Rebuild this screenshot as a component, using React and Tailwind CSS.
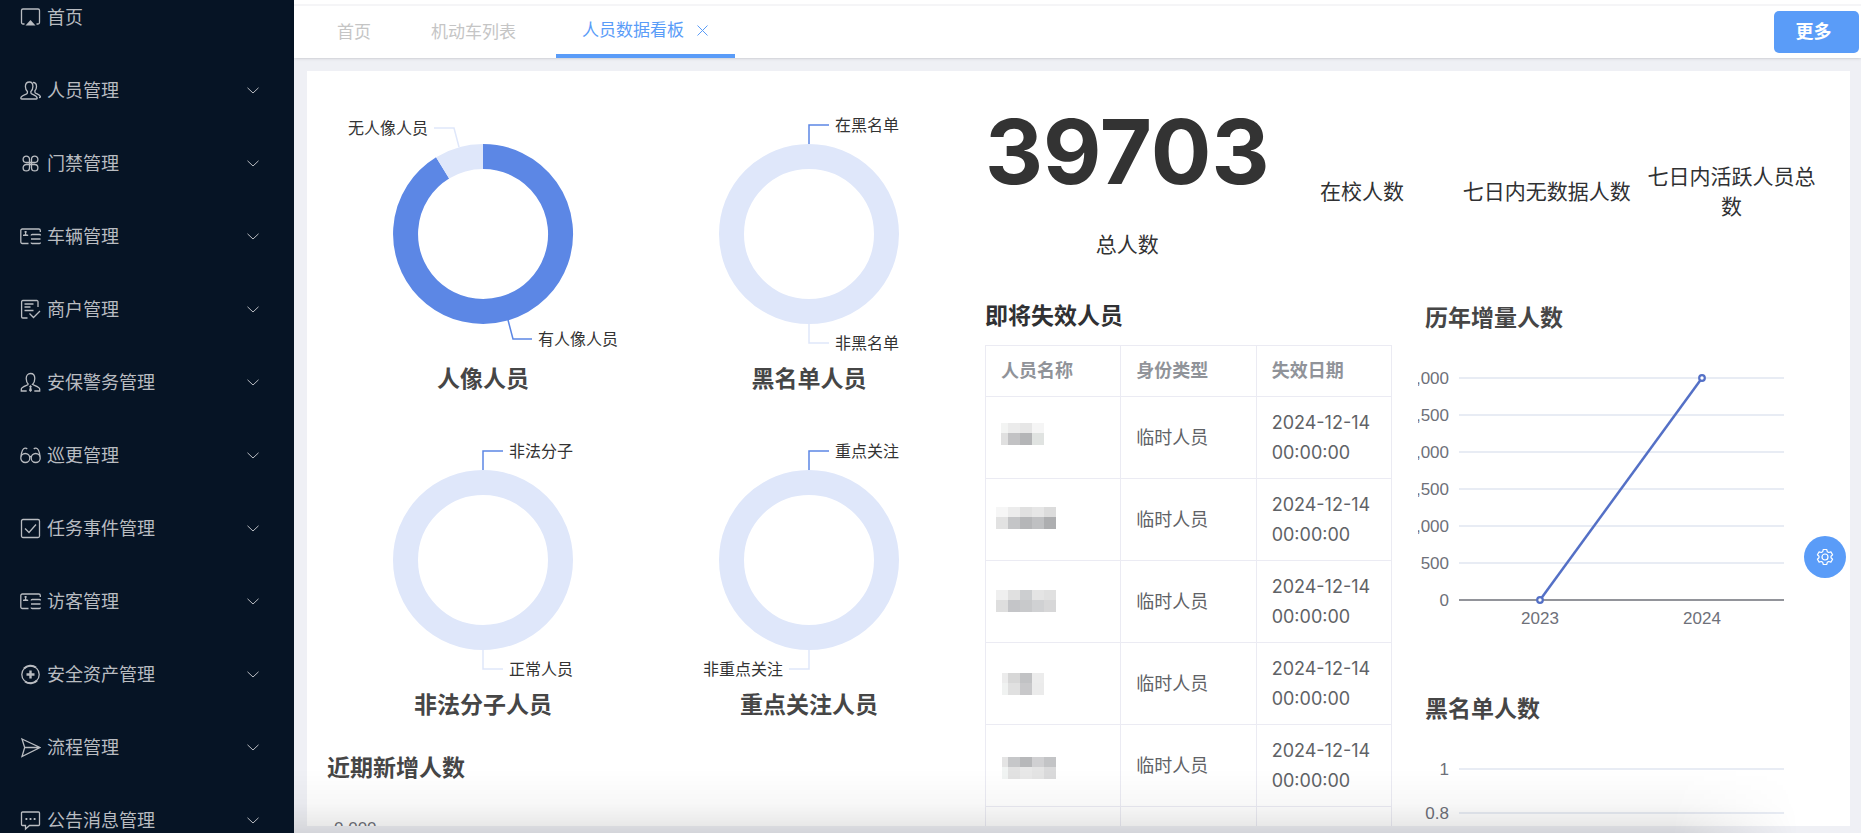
import { useState } from "react";

/* --- ICONS (21x21 grid) --- */
const icons = {
  home: (
    <>
      <path d="M4.500 17H3a1.500 1.500 0 0 1-1.500-1.500V3.500A1.500 1.500 0 0 1 3 2h15a1.500 1.500 0 0 1 1.500 1.500v12A1.500 1.500 0 0 1 18 17h-1.500" />
      <path d="M10.500 13l5 5.500h-10z" fill="currentColor" stroke="none" />
    </>
  ),
  users: (
    <>
      <path d="M9.500 2C7 2 5.400 3.800 5.400 6.500c0 2 .8 3.800 2 4.900v1.300c0 .8-.5 1.100-1.300 1.500-2 .9-5.300 1.800-5.300 4.100 0 .6.4.7.9.7h14.600c.6 0 .9-.2.9-.7 0-2.300-3.200-3.200-5-4.100-.8-.4-1.300-.7-1.300-1.500v-1.300c1.200-1.100 2-2.900 2-4.900C12.900 3.800 11.800 2 9.500 2z" />
      <path d="M13 2.500c2.200 0 3.500 1.700 3.500 4 0 1.700-.6 3.200-1.600 4.300v1.400c0 1.700 5.500 1.900 5.500 4.600 0 .5-.5.7-1.400.7" />
    </>
  ),
  command: (
    <path d="M9.500 9.500V6.300A3.200 3.200 0 1 0 6.300 9.500h8.400a3.200 3.200 0 1 0-3.200-3.200v8.400a3.200 3.200 0 1 0 3.200-3.200H6.300a3.200 3.200 0 1 0 3.200 3.200V9.500" />
  ),
  card: (
    <>
      <path d="M8.500 17.500H2.300a1.500 1.500 0 0 1-1.500-1.500V4.500A1.500 1.500 0 0 1 2.300 3h16.500a1.500 1.500 0 0 1 1.500 1.500V6" />
      <path d="M20.500 9.500c0-.7-.5-1-1-1h-7.300c-.6 0-1 .3-1 1M11 13h9.500M20.500 16.500c0 .7-.5 1-1 1h-7.300c-.6 0-1-.3-1-1" />
      <path d="M4.600 5h2v1.600l-.4.4v1.300l2 .5V10H3V8.800l2-.5V7l-.4-.4z" fill="currentColor" stroke="none" />
    </>
  ),
  doc: (
    <>
      <path d="M7.500 19H2.800a1.200 1.200 0 0 1-1.200-1.200V2.700a1.200 1.200 0 0 1 1.200-1.200h14a1.200 1.200 0 0 1 1.200 1.200V8" />
      <path d="M4.500 5h9M4.500 8h6M4.500 11.500h9M9.500 14.500l4 4 6.500-6.500" />
    </>
  ),
  guard: (
    <>
      <path d="M8.500 12.500C7 11 6.200 9 6.200 6.500 6.200 3.500 8 1.500 10.500 1.500s4.300 2 4.300 5c0 2.500-.8 4.500-2.300 6 2 1 7.200 2.300 7.200 4.500v2h-5.400M8.500 12.500c-2 1-7.200 2.300-7.200 4.500v2h5.400" />
      <path d="M10.500 13l1.400 1.500-.7 1 .8 3-1.500 1.400L9 18.500l.8-3-.7-1z" fill="currentColor" stroke="none" />
    </>
  ),
  glasses: (
    <>
      <circle cx="5.300" cy="13" r="4.500" />
      <circle cx="15.700" cy="13" r="4.500" />
      <path d="M9.500 12c.6-.7 1.400-.7 2 0M1 11.500C1.500 7 2.800 3.500 5 3.200c1-.1 1.700.2 2.200.8M20 11.500c-.5-4.500-1.800-8-4-8.300-1-.1-1.700.2-2.200.8" />
    </>
  ),
  check: (
    <>
      <rect x="1.500" y="1.500" width="18" height="18" rx="1.500" />
      <path d="M5 10.500l4 4 7-8" />
    </>
  ),
  plus: (
    <>
      <circle cx="10.500" cy="10.500" r="8.700" />
      <path d="M4 4.500a9 9 0 0 1 12-1M5 17.500a9 9 0 0 0 12-1" strokeWidth="2" />
      <path d="M10.500 6.500v8M6.500 10.500h8" strokeWidth="2.400" />
    </>
  ),
  send: <path d="M2 2l18 8.500L2 19.500 4.700 10.500zM4.700 10.500H20" />,
  message: (
    <>
      <path d="M2.500 2h16a1 1 0 0 1 1 1v11.500a1 1 0 0 1-1 1H9.500l-4 3.500v-3.500h-3a1 1 0 0 1-1-1V3a1 1 0 0 1 1-1z" />
      <path d="M5.500 9h1.800M9.600 9h1.800M13.700 9h1.800" strokeWidth="1.800" />
    </>
  ),
};

const menu = [
  { name: "首页", icon: "home", leaf: true },
  { name: "人员管理", icon: "users" },
  { name: "门禁管理", icon: "command" },
  { name: "车辆管理", icon: "card" },
  { name: "商户管理", icon: "doc" },
  { name: "安保警务管理", icon: "guard" },
  { name: "巡更管理", icon: "glasses" },
  { name: "任务事件管理", icon: "check" },
  { name: "访客管理", icon: "card" },
  { name: "安全资产管理", icon: "plus" },
  { name: "流程管理", icon: "send" },
  { name: "公告消息管理", icon: "message" },
];

const BLUE = "#5c87e5";
const PALE = "#dfe7fa";

const donuts = [
  {
    title: "人像人员",
    slice: true,
    labels: [
      { text: "无人像人员", color: PALE, line: "114,57 134,57 139,76", x: 108, y: 57, anchor: "end" },
      { text: "有人像人员", color: BLUE, line: "188,249 193,268 212,268", x: 218, y: 268, anchor: "start" },
    ],
  },
  {
    title: "黑名单人员",
    labels: [
      { text: "在黑名单", color: BLUE, line: "163,73 163,54 183,54", x: 189, y: 54, anchor: "start" },
      { text: "非黑名单", color: PALE, line: "163,253 163,272 183,272", x: 189, y: 272, anchor: "start" },
    ],
  },
  {
    title: "非法分子人员",
    labels: [
      { text: "非法分子", color: BLUE, line: "163,73 163,54 183,54", x: 189, y: 54, anchor: "start" },
      { text: "正常人员", color: PALE, line: "163,253 163,272 183,272", x: 189, y: 272, anchor: "start" },
    ],
  },
  {
    title: "重点关注人员",
    labels: [
      { text: "重点关注", color: BLUE, line: "163,73 163,54 183,54", x: 189, y: 54, anchor: "start" },
      { text: "非重点关注", color: PALE, line: "163,253 163,272 143,272", x: 137, y: 272, anchor: "end" },
    ],
  },
];

// Masked names: offset, first cell width, then two rows of 12px cells
const people = [
  { x: 5, y: 0, first: 7, top: ["#f3f4f3", "#ebebeb", "#e6e6e6", "#f5f5f5"], bottom: ["#e0e0e0", "#c2c2c4", "#b4b5b7", "#e0e3e1"] },
  { x: 0, y: 2, first: 12, top: ["#f6f6f6", "#ececec", "#e0e0e0", "#e6e6e6", "#dcdcdc"], bottom: ["#e2e2e2", "#c4c5c7", "#b5b6b8", "#bfc0c2", "#adaeb0"] },
  { x: 0, y: 3, first: 12, top: ["#efefef", "#e0e0e0", "#ccced0", "#e4e4e4", "#e0e0e0"], bottom: ["#dedede", "#c4c5c8", "#c8c9cb", "#d0d1d3", "#d7d7d8"] },
  { x: 6, y: 4, first: 6, top: ["#ececec", "#d7d7d7", "#c1c2c4", "#ececec"], bottom: ["#f0f2f1", "#e0e0e0", "#c8c8ca", "#ebebeb"] },
  { x: 6, y: 6, first: 6, top: ["#e4e4e4", "#c6c7c9", "#b7b8ba", "#d0d0d2", "#c3c4c6"], bottom: ["#f1f4f3", "#e2e2e2", "#e8e8e8", "#e4e4e4", "#dadadb"] },
];

const MenuItem = ({ item }) => (
  <li>
    <a href="#" className="flex h-[73px] items-center pl-5 pr-[35px] text-[18px] leading-6 text-[#b9bcc1]">
      <svg width="21" height="21" viewBox="0 0 21 21" fill="none" stroke="currentColor" strokeWidth="1.300" className="mr-1.5 shrink-0">
        {icons[item.icon]}
      </svg>
      <span className="flex-1">{item.name}</span>
      {!item.leaf && (
        <svg width="12" height="7" viewBox="0 0 12 7" fill="none" stroke="currentColor">
          <path d="M0.500 0.800l5.500 5.200 5.500-5.200" />
        </svg>
      )}
    </a>
  </li>
);

const Donut = ({ data }) => (
  <svg viewBox="0 0 326 326" className="w-full" role="img" aria-label={data.title}>
    {data.slice ? (
      <>
        <path d="M163 85.500A77.500 77.500 0 1 1 122.600 96.900" fill="none" stroke={BLUE} strokeWidth="25" />
        <path d="M122.600 96.900A77.500 77.500 0 0 1 163 85.500" fill="none" stroke={PALE} strokeWidth="25" />
      </>
    ) : (
      <circle cx="163" cy="163" r="77.500" fill="none" stroke={PALE} strokeWidth="25" />
    )}
    {data.labels.map((label) => (
      <g key={label.text}>
        <polyline points={label.line} fill="none" stroke={label.color} strokeWidth="1.500" />
        <text x={label.x} y={label.y + 6} textAnchor={label.anchor} fontSize="16" fill="#333">
          {label.text}
        </text>
      </g>
    ))}
    <text x="163" y="316" textAnchor="middle" fontSize="23" fontWeight="bold" fill="#464646">
      {data.title}
    </text>
  </svg>
);

const MaskedName = ({ person }) => (
  <svg width="66" height="34" viewBox="0 0 66 34" shapeRendering="crispEdges">
    {["top", "bottom"].map((row) =>
      person[row].map((color, i) => (
        <rect
          key={row + i}
          x={i === 0 ? person.x : person.x + person.first + (i - 1) * 12}
          y={person.y + (row === "top" ? 2 : 12)}
          width={i === 0 ? person.first : 12}
          height={row === "top" ? 10 : 12}
          fill={color}
        />
      ))
    )}
  </svg>
);

const GridLine = ({ y, label, axis }) => (
  <g>
    <line x1="41" x2="366" y1={y} y2={y} stroke={axis ? "#6e7079" : "#e0e6f1"} strokeWidth="1.500" />
    <text x="31" y={y + 6} textAnchor="end" fontSize="17" fill="#6e7079">
      {label}
    </text>
  </g>
);

const YearChart = () => (
  <svg viewBox="0 0 416 310" className="w-full font-['Liberation_Sans',sans-serif]">
    {[",000", ",500", ",000", ",500", ",000", "500", "0"].map((label, i) => (
      <GridLine key={i} y={45 + i * 37} label={label} axis={i === 6} />
    ))}
    <line x1="122" y1="267" x2="284" y2="45" stroke="#5470c6" strokeWidth="2.500" />
    <circle cx="122" cy="267" r="2.800" fill="#fff" stroke="#5470c6" strokeWidth="2.200" />
    <circle cx="284" cy="45" r="2.800" fill="#fff" stroke="#5470c6" strokeWidth="2.200" />
    <g fontSize="17" fill="#6e7079" textAnchor="middle">
      <text x="122" y="291">2023</text>
      <text x="284" y="291">2024</text>
    </g>
  </svg>
);

const BlacklistChart = () => (
  <svg viewBox="0 0 416 100" className="w-full font-['Liberation_Sans',sans-serif]">
    {["1", "0.8"].map((label, i) => (
      <GridLine key={label} y={45 + i * 44} label={label} />
    ))}
  </svg>
);

const Stat = ({ label }) => (
  <div className="self-center px-2 text-center text-[21px] leading-[30px] text-[#303133]">{label}</div>
);

const App = () => {
  const [tabs, setTabs] = useState(["首页", "机动车列表", "人员数据看板"]);
  const active = "人员数据看板";

  return (
    <div className="relative flex h-screen overflow-hidden bg-[#eff0f5] font-['Inter','Noto_Sans_CJK_SC',sans-serif]">
      {/* LEFT: MENU */}
      <nav className="w-[294px] shrink-0 overflow-hidden bg-[#061425]">
        <ul className="-mt-[19px]">
          {menu.map((item) => (
            <MenuItem key={item.name} item={item} />
          ))}
        </ul>
      </nav>

      <div className="flex min-w-0 flex-1 flex-col">
        {/* TOP: TABS */}
        <header className="flex h-[58px] shrink-0 flex-col bg-white shadow-sm">
          <div className="mt-1 h-0.5 bg-[#f5f5f7]" />
          <div className="flex flex-1 items-stretch pl-[13px] pr-0.5">
            {tabs.map((tab) =>
              tab === active ? (
                <div key={tab} className="ml-2.5 flex items-center gap-3 border-b-4 border-[#5a9cf8] px-[26px] text-[17px] leading-6 text-[#5a9cf8]">
                  <button>{tab}</button>
                  <button aria-label="关闭" onClick={() => setTabs(tabs.filter((t) => t !== tab))}>
                    <svg width="13" height="11" viewBox="0 0 13 11" fill="none" stroke="currentColor">
                      <path d="M1.500 0.500l10 10M11.500 0.500l-10 10" />
                    </svg>
                  </button>
                </div>
              ) : (
                <button key={tab} className="px-[30px] text-[17px] leading-6 text-[#c5c5c5]">
                  {tab}
                </button>
              )
            )}
            <button className="ml-auto mt-[5px] h-[42px] w-[85px] rounded-[5px] bg-[#5a9cf8] pr-1.5 text-[18px] font-bold leading-6 text-white">
              更多
            </button>
          </div>
        </header>

        {/* DASHBOARD */}
        <main className="mb-[7px] ml-[13px] mr-[11px] mt-[13px] grid min-h-0 flex-1 grid-cols-[652fr_849fr] gap-[13px] overflow-hidden bg-white pl-[13px] pr-4">
          <section className="min-w-0">
            <div className="grid grid-cols-2">
              {donuts.map((data) => (
                <Donut key={data.title} data={data} />
              ))}
            </div>
            <h2 className="mt-[30px] pl-[7px] text-[23px] font-bold leading-[30px] text-[#464646]">近期新增人数</h2>
            <div className="mt-[34px] pl-3.5 font-['Liberation_Sans',sans-serif] text-[17px] leading-6 text-[#6e7079]">0,000</div>
          </section>

          <section className="min-w-0 pt-4">
            <div className="grid h-[210px] grid-cols-[auto_1fr_1fr_1fr] pr-2.5">
              <div className="text-center text-[#333]">
                <div className="text-[90px] font-bold leading-[130px]">39703</div>
                <div className="mt-[13px] text-[21px] leading-[30px]">总人数</div>
              </div>
              <Stat label="在校人数" />
              <Stat label="七日内无数据人数" />
              <Stat label="七日内活跃人员总数" />
            </div>

            <div className="mt-1 grid grid-cols-[407fr_416fr] gap-[26px]">
              <div className="min-w-0">
                <h2 className="mb-3.5 text-[23px] font-bold leading-[30px] text-[#303133]">即将失效人员</h2>
                <table className="w-full table-fixed border-collapse text-left text-[18px] leading-[30px] text-[#606266]">
                  <thead>
                    <tr className="h-[51px] text-[#909399]">
                      {["人员名称", "身份类型", "失效日期"].map((name) => (
                        <th key={name} className="border border-[#ebebf3] px-[15px] font-bold">
                          {name}
                        </th>
                      ))}
                    </tr>
                  </thead>
                  <tbody>
                    {people.map((person, i) => (
                      <tr key={i} className="h-[82px]">
                        <td className="border border-[#ebebf3] pl-2.5">
                          <MaskedName person={person} />
                        </td>
                        <td className="border border-[#ebebf3] px-[15px]">临时人员</td>
                        <td className="border border-[#ebebf3] px-[15px]">2024-12-14 00:00:00</td>
                      </tr>
                    ))}
                    <tr className="h-[82px]">
                      <td className="border border-[#ebebf3]" />
                      <td className="border border-[#ebebf3]" />
                      <td className="border border-[#ebebf3]" />
                    </tr>
                  </tbody>
                </table>
              </div>

              <div className="min-w-0 pt-0.5">
                <h2 className="pl-[7px] text-[23px] font-bold leading-[30px] text-[#464646]">历年增量人数</h2>
                <YearChart />
                <h2 className="mt-[51px] pl-[7px] text-[23px] font-bold leading-[30px] text-[#464646]">黑名单人数</h2>
                <BlacklistChart />
              </div>
            </div>
          </section>
        </main>
      </div>

      <button aria-label="设置" className="absolute bottom-[255px] right-[15px] flex size-[42px] items-center justify-center rounded-full bg-[#5a9cf8] text-white">
        <svg width="18" height="18" viewBox="0 0 18 18" fill="none" stroke="currentColor" strokeWidth="1.200" strokeLinejoin="round">
          <path d="M7.300 1.500h3.400l.6 2.200 1.400.8 2.200-.6 1.700 2.900L15 8.300v1.400l1.600 1.500-1.700 2.900-2.200-.6-1.400.8-.6 2.200H7.300l-.6-2.200-1.400-.8-2.200.6-1.700-2.900L3 9.700V8.300L1.400 6.800l1.700-2.900 2.200.6 1.400-.8z" />
          <circle cx="9" cy="9" r="3" />
        </svg>
      </button>

      {/* Soft shade along the bottom edge */}
      <div className="pointer-events-none absolute bottom-0 left-[294px] right-0 h-[64px] bg-linear-to-t from-black/11 via-black/3 via-45% to-transparent [mask-image:linear-gradient(to_right,black_88%,transparent_96%)]" />
    </div>
  );
};

export default App;
